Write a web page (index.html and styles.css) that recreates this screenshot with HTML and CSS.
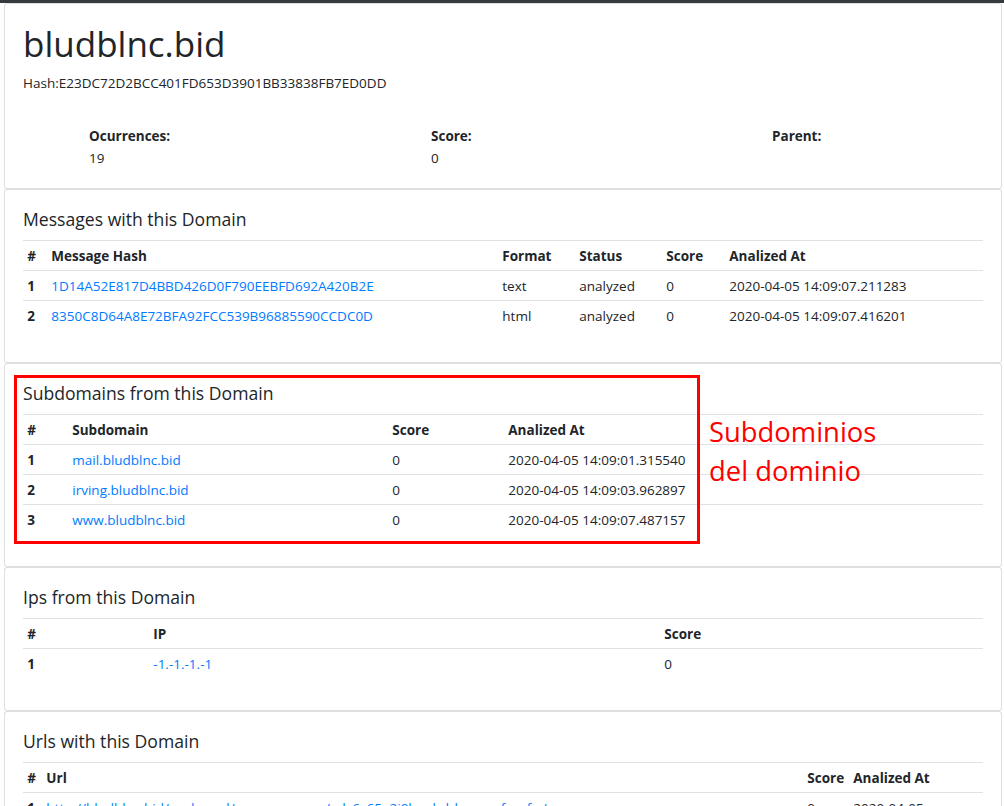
FILE: index.html
```html
<!DOCTYPE html>
<html lang="en">
<head>
<meta charset="utf-8">
<title>bludblnc.bid</title>
<link rel="stylesheet" href="styles.css">
</head>
<body>
<div class="topbar"></div>
<main class="page">
  <section class="card">
    <div class="card-body">
      <h1 class="domain">bludblnc.bid</h1>
      <p class="hash">Hash:E23DC72D2BCC401FD653D3901BB33838FB7ED0DD</p>
      <div class="stats">
        <div class="stat"><div class="stat-label">Ocurrences:</div><div class="stat-value">19</div></div>
        <div class="stat"><div class="stat-label">Score:</div><div class="stat-value">0</div></div>
        <div class="stat"><div class="stat-label">Parent:</div><div class="stat-value"></div></div>
      </div>
    </div>
  </section>

  <section class="card">
    <div class="card-body">
      <h5 class="card-title">Messages with this Domain</h5>
      <table class="table">
        <colgroup>
          <col class="w24"><col class="w451"><col class="w77"><col class="w87"><col class="w63"><col class="wrest">
        </colgroup>
        <thead>
          <tr><th>#</th><th>Message Hash</th><th>Format</th><th>Status</th><th>Score</th><th>Analized At</th></tr>
        </thead>
        <tbody>
          <tr><th>1</th><td><a href="#">1D14A52E817D4BBD426D0F790EEBFD692A420B2E</a></td><td>text</td><td>analyzed</td><td>0</td><td>2020-04-05 14:09:07.211283</td></tr>
          <tr><th>2</th><td><a href="#">8350C8D64A8E72BFA92FCC539B96885590CCDC0D</a></td><td>html</td><td>analyzed</td><td>0</td><td>2020-04-05 14:09:07.416201</td></tr>
        </tbody>
      </table>
    </div>
  </section>

  <section class="card">
    <div class="card-body">
      <h5 class="card-title">Subdomains from this Domain</h5>
      <table class="table">
        <colgroup>
          <col class="w45"><col class="w320"><col class="w116"><col class="wrest">
        </colgroup>
        <thead>
          <tr><th>#</th><th>Subdomain</th><th>Score</th><th>Analized At</th></tr>
        </thead>
        <tbody>
          <tr><th>1</th><td><a href="#">mail.bludblnc.bid</a></td><td>0</td><td>2020-04-05 14:09:01.315540</td></tr>
          <tr><th>2</th><td><a href="#">irving.bludblnc.bid</a></td><td>0</td><td>2020-04-05 14:09:03.962897</td></tr>
          <tr><th>3</th><td><a href="#">www.bludblnc.bid</a></td><td>0</td><td>2020-04-05 14:09:07.487157</td></tr>
        </tbody>
      </table>
    </div>
  </section>

  <section class="card">
    <div class="card-body">
      <h5 class="card-title">Ips from this Domain</h5>
      <table class="table">
        <colgroup>
          <col class="w126"><col class="w511"><col class="wrest">
        </colgroup>
        <thead>
          <tr><th>#</th><th>IP</th><th>Score</th></tr>
        </thead>
        <tbody>
          <tr><th>1</th><td><a href="#">-1.-1.-1.-1</a></td><td>0</td></tr>
        </tbody>
      </table>
    </div>
  </section>

  <section class="card">
    <div class="card-body">
      <h5 class="card-title">Urls with this Domain</h5>
      <table class="table">
        <colgroup>
          <col class="w19"><col class="w761"><col class="w46"><col class="wrest">
        </colgroup>
        <thead>
          <tr><th>#</th><th>Url</th><th>Score</th><th>Analized At</th></tr>
        </thead>
        <tbody>
          <tr><th>1</th><td class="url"><a href="#">http://bludblnc.bid/vwdcsmcl/rumcwmzemu/edc6c65e2i9lnmbdrhvpoqsfuvcfw/ hlgnzvpkbkqdqfjtpczkmiyrsd/nbnmwxkgywjvzgtrbyaqnkthlmcdtpzoyrwb</a></td><td>0</td><td>2020-04-05 14:09:07.533871</td></tr>
        </tbody>
      </table>
    </div>
  </section>
</main>

<div class="annotation-box"></div>
<div class="annotation-text">Subdominios<br>del dominio</div>
</body>
</html>
```

FILE: styles.css
```css
html, body {
  margin: 0;
  padding: 0;
  overflow: hidden;
}

body {
  position: relative;
  background: #fff;
  color: #212529;
  font-family: "Open Sans", "Noto Sans", sans-serif;
  font-size: 13.5px;
  line-height: 21.6px;
}

a {
  color: #007bff;
  text-decoration: none;
}

.topbar {
  height: 3px;
  background: #343a40;
}

.page {
  padding: 0 2px 0 4px;
}

.card {
  border: 1px solid rgba(0, 0, 0, 0.125);
  border-radius: 3.6px;
  background: #fff;
}

.card-body {
  padding: 18px 18px;
}

.card:first-child .card-body {
  padding-bottom: 19px;
}

.domain {
  margin: 0 0 7px;
  font-size: 35px;
  line-height: 43px;
  font-weight: 500;
}

.hash {
  margin: 0;
  line-height: 22px;
}

.stats {
  margin-top: 31px;
  padding-left: 66px;
  display: grid;
  grid-template-columns: 342px 341px 1fr;
}

.stat-label {
  font-weight: 700;
  line-height: 22px;
}

.stat-value {
  line-height: 22px;
  min-height: 22px;
}

.card-title {
  margin: 0 0 9.5px;
  font-size: 17.6px;
  line-height: 22px;
  font-weight: 400;
}

.table {
  width: 100%;
  border-collapse: collapse;
  table-layout: fixed;
  margin-bottom: 14.5px;
}

.table th,
.table td {
  padding: 5px 4.3px 3px;
  line-height: 21px;
  border-top: 1px solid #dee2e6;
  text-align: left;
  vertical-align: top;
  white-space: nowrap;
}

.table th {
  font-weight: 700;
}

.table td.url {
  white-space: normal;
  overflow-wrap: anywhere;
}

.table tbody tr:last-child td,
.table tbody tr:last-child th {
  white-space: normal;
}

.w19 { width: 19px; }
.w24 { width: 24px; }
.w45 { width: 45px; }
.w46 { width: 46px; }
.w63 { width: 63px; }
.w77 { width: 77px; }
.w87 { width: 87px; }
.w116 { width: 116px; }
.w126 { width: 126px; }
.w320 { width: 320px; }
.w451 { width: 451px; }
.w511 { width: 511px; }
.w761 { width: 761px; }
.wrest { width: auto; }

.annotation-box {
  position: absolute;
  left: 14px;
  top: 375px;
  width: 686px;
  height: 169px;
  box-sizing: border-box;
  border: 3px solid #ff0000;
}

.annotation-text {
  position: absolute;
  left: 709px;
  top: 413px;
  color: #ff0000;
  font-family: "Open Sans", "Noto Sans", sans-serif;
  font-size: 27.4px;
  line-height: 38.7px;
}
```
